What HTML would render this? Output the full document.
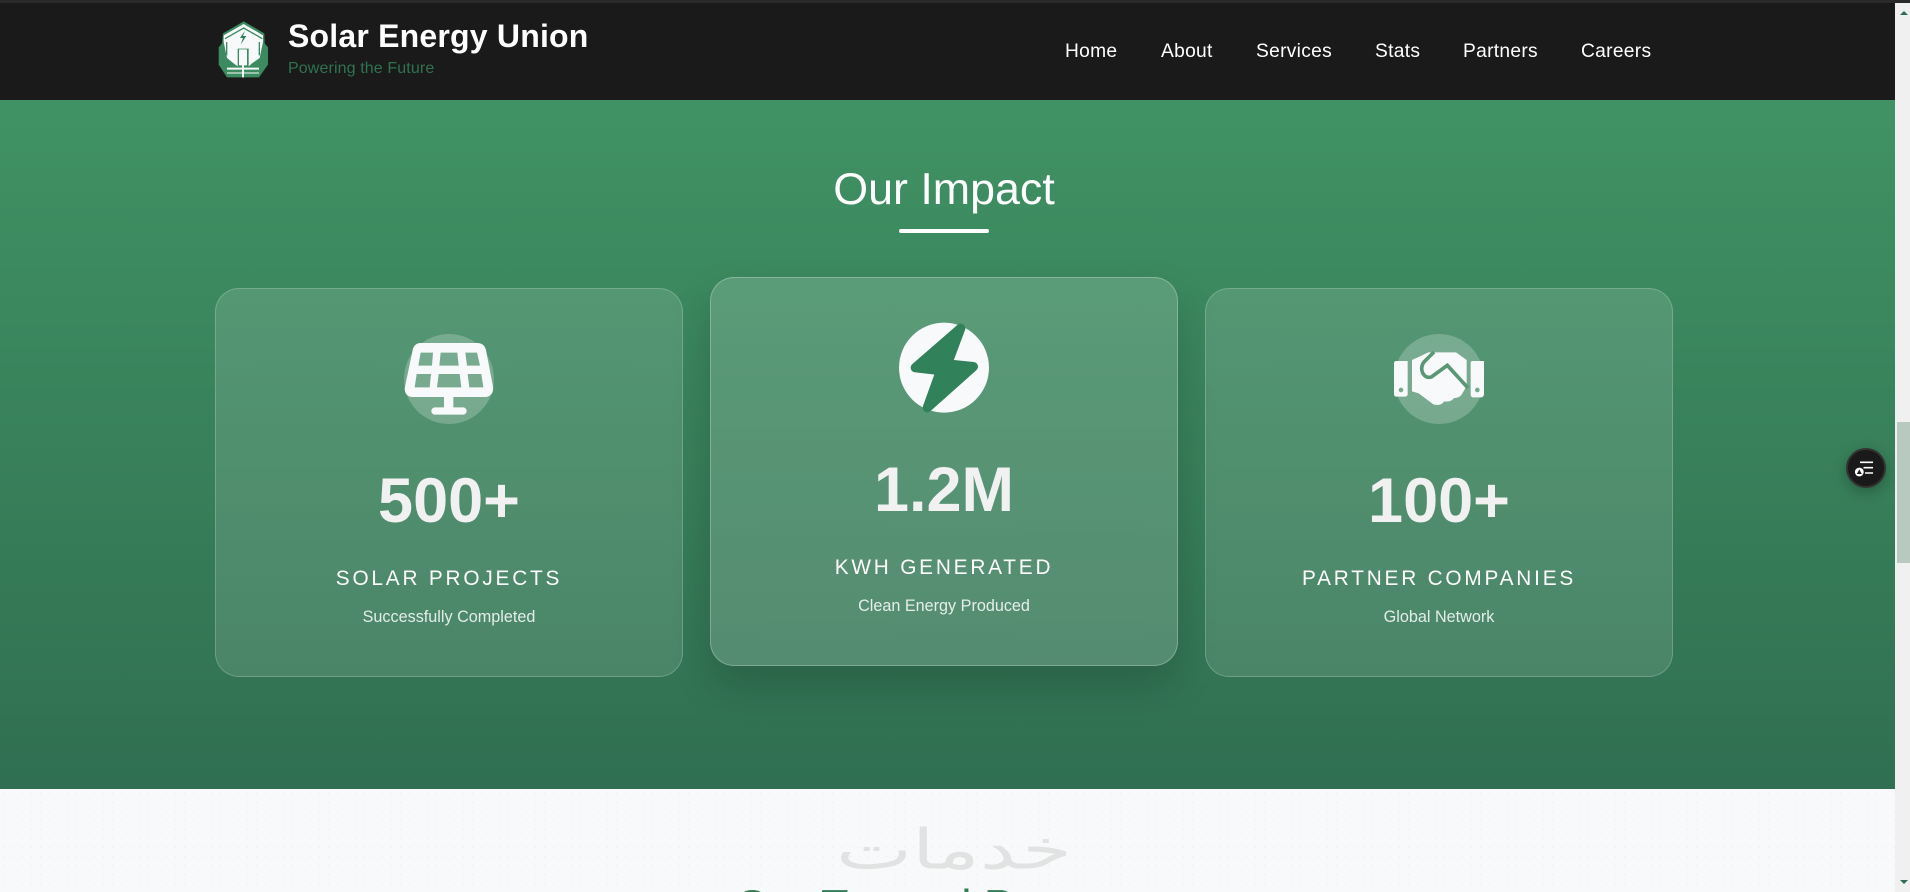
<!DOCTYPE html>
<html lang="en"><head><meta charset="utf-8"><title>Solar Energy Union</title>
<style>
*{box-sizing:border-box;margin:0;padding:0}
html,body{width:1910px;height:892px;overflow:hidden;background:#f8f9fa;font-family:"Liberation Sans",sans-serif}
.a{position:absolute;white-space:nowrap;line-height:1}
#top{position:absolute;left:0;top:0;width:1910px;height:3px;background:#2a2a2a;z-index:5}
#hdr{position:absolute;left:0;top:0;width:1895px;height:100px;background:#1a1a1a}
#sec{position:absolute;left:0;top:100px;width:1895px;height:689px;background:linear-gradient(180deg,#409264 0%,#306f51 100%)}
#low{position:absolute;left:0;top:789px;width:1895px;height:103px;overflow:hidden;background-color:#f8f9fa;background-image:radial-gradient(#e9ecee 0.7px,transparent 0.8px);background-size:9px 9px}
.nav{top:42px;font-size:19.2px;color:#fff;letter-spacing:.3px}
.card{position:absolute;width:468px;height:389px;border-radius:24px;border:1px solid rgba(255,255,255,.2);background:linear-gradient(180deg,rgba(255,255,255,.13),rgba(255,255,255,.12))}
.mid{background:linear-gradient(180deg,rgba(255,255,255,.16),rgba(255,255,255,.165));border-color:rgba(255,255,255,.26);box-shadow:0 20px 40px rgba(0,0,0,.17)}
.c{width:468px;text-align:center}
.num{font-size:63px;font-weight:700;color:#f1f1f1}
.lab{font-size:20.8px;letter-spacing:2.8px;color:#fff}
.sub{font-size:16.2px;color:#fff;opacity:.85}
svg{position:absolute;overflow:visible}
#sb{position:absolute;left:1895px;top:3px;width:15px;height:889px;background:#f0f0f0}
#th{position:absolute;left:1897px;top:422px;width:13px;height:141px;background:#b8c9c0}
</style></head><body>
<div id="hdr"></div><div id="top"></div>

<svg style="left:217px;top:18px" width="54" height="68" viewBox="0 0 162 204">
<path d="M80 10L142 46 143 76 153 88V140L126 178H30L5 140V88L15 76 18 46Z" fill="#3b8a60"/>
<path d="M80 18L138 52V72L128 120 105 136 95 145V92H62V145L50 136 30 120 20 72V52Z" fill="#f8f9fa"/>
<path d="M24 62L80 30 136 62" fill="none" stroke="#3b8a60" stroke-width="4"/>
<path d="M29 72V112M127 72V112" stroke="#3b8a60" stroke-width="4" fill="none"/>
<path d="M84 38L69 60H78L71 80 88 54H78Z" fill="#2f7d57"/>
<rect x="66" y="94" width="24" height="48" rx="2" fill="#f8f9fa"/>
<path d="M30 152H126M78 140V178" stroke="#f8f9fa" stroke-width="6" fill="none"/>
<path d="M30 165H126" stroke="#f8f9fa" stroke-width="3" fill="none"/>
</svg>
<div class="a" style="left:288px;top:20px;font-size:32px;font-weight:700;color:#fff;letter-spacing:.2px">Solar Energy Union</div>
<div class="a" style="left:288px;top:61px;font-size:16px;color:#2f7350;letter-spacing:.12px">Powering the Future</div>
<div class="a nav" style="left:1065px">Home</div>
<div class="a nav" style="left:1161px">About</div>
<div class="a nav" style="left:1256px">Services</div>
<div class="a nav" style="left:1375px">Stats</div>
<div class="a nav" style="left:1463px">Partners</div>
<div class="a nav" style="left:1581px">Careers</div>

<div id="sec"></div>
<div class="a" style="left:644px;width:600px;text-align:center;top:167px;font-size:44.8px;color:#fff">Our Impact</div>
<div style="position:absolute;left:899px;top:229px;width:90px;height:4px;border-radius:2px;background:#fff"></div>

<div class="card" style="left:215px;top:288px"></div>
<div class="card mid" style="left:710px;top:277px"></div>
<div class="card" style="left:1205px;top:288px"></div>

<!-- solar -->
<svg style="left:370px;top:310px" width="160" height="130" viewBox="0 0 480 390">
<circle cx="237" cy="207" r="135" fill="#fff" fill-opacity=".22"/>
<path fill="#f8f9fa" fill-rule="evenodd" d="M152 99H322C336 99 345 107 348 120L369 230C372 248 361 261 346 261H250V292H279C285 292 290 297 290 303S285 314 279 314H195C189 314 184 309 184 303S189 292 195 292H222V261H128C112 261 101 248 105 230L128 120C131 107 139 99 152 99ZM152 128L145 167H186L189 128ZM212 128L208 167H266L262 128ZM286 128L291 167H330L321 128ZM140 192L134 232H179L183 192ZM206 192L201 232H274L269 192ZM293 192L298 232H340L334 192Z"/>
</svg>
<!-- bolt -->
<svg style="left:870px;top:300px" width="160" height="130" viewBox="0 0 480 390">
<circle cx="222" cy="203" r="135" fill="#f8f9fa"/>
<path d="M272 85L136 203 212 212 172 323 310 200 232 192Z" fill="#31825b" stroke="#31825b" stroke-width="28" stroke-linejoin="round"/>
</svg>
<!-- handshake -->
<svg style="left:1360px;top:310px" width="160" height="130" viewBox="0 0 480 390">
<circle cx="237" cy="207" r="135" fill="#fff" fill-opacity=".22"/>
<path fill="#f8f9fa" fill-rule="evenodd" d="M108 153H143V252C143 257 139 260 135 260H110C105 260 102 257 102 252V159C102 156 105 153 108 153ZM123 233A7 7 0 1 0 123 247 7 7 0 1 0 123 233ZM337 153H372V252C372 257 369 262 364 262H340C335 262 332 258 332 253V158C332 155 334 153 337 153ZM352 233A7 7 0 1 0 352 247 7 7 0 1 0 352 233Z"/>
<path fill="#f8f9fa" d="M156 150L205 127H288L320 150V228L306 252C300 262 290 264 282 264 276 274 262 276 252 274 246 286 226 288 216 280L176 250 156 244Z"/>
<path d="M222 126L192 156C176 176 190 208 214 201L262 166 324 234" fill="none" stroke="#5a9875" stroke-width="11"/>
</svg>

<div class="a c num" style="left:215px;top:470px">500+</div>
<div class="a c lab" style="left:215px;top:569px">SOLAR PROJECTS</div>
<div class="a c sub" style="left:215px;top:609px">Successfully Completed</div>

<div class="a c num" style="left:710px;top:459px">1.2M</div>
<div class="a c lab" style="left:710px;top:558px">KWH GENERATED</div>
<div class="a c sub" style="left:710px;top:598px">Clean Energy Produced</div>

<div class="a c num" style="left:1205px;top:470px">100+</div>
<div class="a c lab" style="left:1205px;top:569px">PARTNER COMPANIES</div>
<div class="a c sub" style="left:1205px;top:609px">Global Network</div>

<div id="low">
<div class="a" dir="rtl" lang="ar" style="left:654px;width:600px;text-align:center;top:24px;font-family:'DejaVu Sans',sans-serif;font-size:64px;color:#e0e3e2;line-height:1.1;transform:scale(1.26,.86);transform-origin:50% 75%">خدمات</div>
<div class="a" style="left:644px;width:600px;text-align:center;top:95px;font-size:44.8px;color:#2e7d55">Our Trusted Partners</div>
</div>

<div style="position:absolute;left:1846px;top:448px;width:40px;height:40px;border-radius:50%;background:#1a1a1a;border:2px solid #333;box-shadow:0 4px 14px rgba(0,0,0,.25)"></div>
<svg style="left:1846px;top:448px" width="40" height="40" viewBox="0 0 40 40">
<path d="M14 14.300H27M17.500 19.700H27M19 25H27" stroke="#fff" stroke-width="1.6" fill="none"/>
<circle cx="13.300" cy="24" r="4.400" fill="#fff"/><path d="M13.300 21.500L15.800 26H10.800Z" fill="#1a1a1a"/>
</svg>

<div id="sb"></div><div id="th"></div>
<svg style="left:1895px;top:0" width="15" height="892"><path d="M5 15L9 11 13 15Z" fill="#2f6e50"/><path d="M5 880H13L9 884Z" fill="#2f6e50"/></svg>
</body></html>
